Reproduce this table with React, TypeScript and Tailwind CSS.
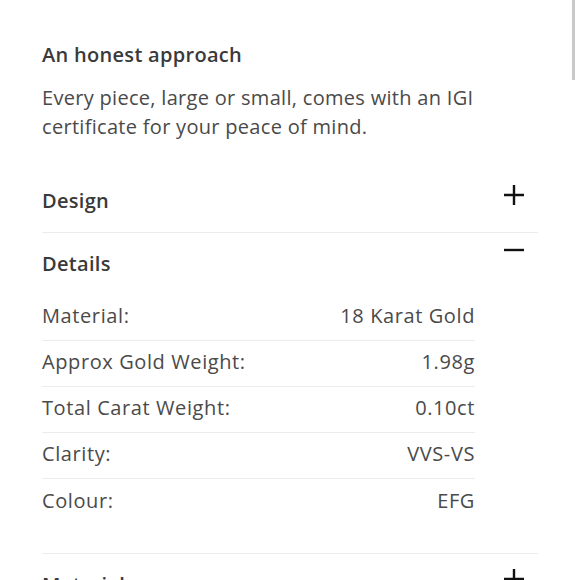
import React from 'react';

const rows = [
  { label: 'Material:', value: '18 Karat Gold' },
  { label: 'Approx Gold Weight:', value: '1.98g' },
  { label: 'Total Carat Weight:', value: '0.10ct' },
  { label: 'Clarity:', value: 'VVS-VS' },
  { label: 'Colour:', value: 'EFG' },
];

const PlusIcon = () => (
  <svg width="20" height="20" viewBox="0 0 20 20" className="block">
    <path d="M10 0v20M0 10h20" stroke="#111" strokeWidth="2.4" fill="none" />
  </svg>
);

const MinusIcon = () => (
  <svg width="20" height="20" viewBox="0 0 20 20" className="block">
    <path d="M0 10h20" stroke="#111" strokeWidth="2.4" fill="none" />
  </svg>
);

const App: React.FC = () => {
  return (
    <div
      className="relative w-[580px] h-[580px] overflow-hidden bg-white text-[#4a4a4a] tracking-[0.3px]"
      style={{ fontFamily: '"Open Sans", "Liberation Sans", sans-serif' }}
    >
      <div className="absolute right-[5px] top-0 w-[3px] h-[80px] bg-[#c9c9c9]" />

      <div className="pl-[42px] pr-[42px] pt-[43px]">
        <h2 className="text-[20px] leading-[24px] font-semibold text-[#3a3a3a]">An honest approach</h2>
        <p className="mt-[16px] text-[20px] leading-[29px]">
          Every piece, large or small, comes with an IGI certificate for your peace of mind.
        </p>

        {/* Design */}
        <div className="flex justify-between border-b border-[#ececec] pb-[19px] pt-[48px]">
          <span className="text-[20px] leading-[24px] font-semibold text-[#3a3a3a]">Design</span>
          <span className="mr-[14px] -mt-[4px]">
            <PlusIcon />
          </span>
        </div>

        {/* Details */}
        <div className="border-b border-[#ececec] pb-[28px]">
          <div className="flex justify-between pt-[19px]">
            <span className="text-[20px] leading-[24px] font-semibold text-[#3a3a3a]">Details</span>
            <span className="mr-[14px] -mt-[12px]">
              <MinusIcon />
            </span>
          </div>
          <div className="mt-[19px] w-[433px] tracking-[0.6px]">
            {rows.map((r, i) => (
              <div
                key={r.label}
                className={`flex justify-between items-center h-[46px] pb-[3px] text-[20px] ${
                  i < rows.length - 1 ? 'border-b border-[#ececec]' : ''
                }`}
              >
                <span>{r.label}</span>
                <span>{r.value}</span>
              </div>
            ))}
          </div>
        </div>

        {/* Materials */}
        <div className="flex justify-between pt-[19px]">
          <span className="text-[20px] leading-[24px] font-semibold text-[#3a3a3a]">Materials</span>
          <span className="mr-[14px] -mt-[4px]">
            <PlusIcon />
          </span>
        </div>
      </div>
    </div>
  );
};

export default App;
